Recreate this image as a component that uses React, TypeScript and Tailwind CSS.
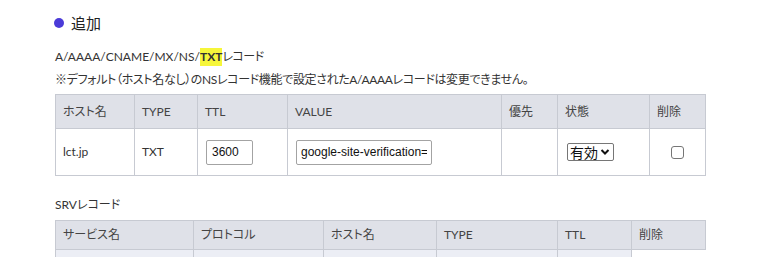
import React from 'react';

const FONT = "font-['Lato','Noto_Sans_CJK_JP',sans-serif] [font-feature-settings:'palt']";
const th = 'border border-[#c7cad2] bg-[#dfe1e8] px-[7px] text-left font-normal text-[12px] text-[#444]';
const td = 'border border-[#c7cad2] px-[7px] text-[12px] text-[#333]';
const field = "h-[25px] border border-[#a3a3a3] rounded-[2px] text-[12px] font-['Liberation_Sans',Arial,sans-serif] text-[#111]";

const App: React.FC = () => {
  return (
    <div className={`w-[766px] h-[257px] overflow-hidden bg-white text-[#333] ${FONT}`}>
      <div className="pl-[54px] pt-[13px] w-[705px]">
        <div className="flex items-center gap-[7px] h-[20px]">
          <span className="w-[10px] h-[10px] rounded-full bg-[#4b3bd8]" />
          <span className="text-[15px] font-normal text-[#222]">追加</span>
        </div>

        <div className="mt-[14px] h-[20px] flex items-center text-[12px] pl-[1px]">
          A/AAAA/CNAME/MX/NS/<span className="bg-[#f6f63a] font-bold">TXT</span>
          <span className="tracking-[-0.5px]">レコード</span>
        </div>
        <div className="mt-[3px] h-[20px] flex items-center text-[12px] pl-[1px] tracking-[-0.35px]">
          ※デフォルト（ホスト名なし）のNSレコード機能で設定されたA/AAAAレコードは変更できません。
        </div>

        <table className="mt-[4px] ml-[1px] w-[650px] border-collapse table-fixed">
          <colgroup>
            <col className="w-[79px]" />
            <col className="w-[63px]" />
            <col className="w-[90px]" />
            <col className="w-[214px]" />
            <col className="w-[56px]" />
            <col className="w-[92px]" />
            <col className="w-[56px]" />
          </colgroup>
          <thead>
            <tr className="h-[34px]">
              <th className={th}>ホスト名</th>
              <th className={th}>TYPE</th>
              <th className={th}>TTL</th>
              <th className={th}>VALUE</th>
              <th className={th}>優先</th>
              <th className={th}>状態</th>
              <th className={th}>削除</th>
            </tr>
          </thead>
          <tbody>
            <tr className="h-[47px]">
              <td className={td}>lct.jp</td>
              <td className={td}>TXT</td>
              <td className={td}>
                <input defaultValue="3600" className={`${field} ml-[1px] w-[47px] px-[5px]`} />
              </td>
              <td className={td}>
                <input
                  defaultValue="google-site-verification=xxxxxxxxxxxx"
                  className={`${field} ml-[1px] w-[136px] px-[4px]`}
                />
              </td>
              <td className={td}></td>
              <td className={td}>
                <div className="relative ml-[2px] w-[47px] h-[18px]">
                  <select className="appearance-none block w-[47px] h-[18px] border border-[#767676] rounded-[2px] pl-[2px] pr-[14px] text-[14px] leading-[16px] font-['Noto_Sans_CJK_JP',sans-serif] text-[#111]">
                    <option>有効</option>
                    <option>無効</option>
                  </select>
                  <svg className="absolute right-[4px] top-[5px] pointer-events-none" width="10" height="8" viewBox="0 0 10 8">
                    <path d="M1.5 2 L5 5.5 L8.5 2" fill="none" stroke="#111" strokeWidth="2" />
                  </svg>
                </div>
              </td>
              <td className={`${td} text-center`}>
                <input
                  type="checkbox"
                  className="appearance-none align-middle w-[13px] h-[13px] border border-[#767676] rounded-[3px] bg-white"
                />
              </td>
            </tr>
          </tbody>
        </table>

        <div className="mt-[19px] h-[20px] flex items-center text-[12px] pl-[1px]">SRVレコード</div>

        <table className="mt-[5px] ml-[1px] w-[650px] border-collapse table-fixed">
          <colgroup>
            <col className="w-[138px]" />
            <col className="w-[130px]" />
            <col className="w-[113px]" />
            <col className="w-[121px]" />
            <col className="w-[74px]" />
            <col className="w-[74px]" />
          </colgroup>
          <thead>
            <tr className="h-[29px]">
              <th className={th}>サービス名</th>
              <th className={th}>プロトコル</th>
              <th className={th}>ホスト名</th>
              <th className={th}>TYPE</th>
              <th className={th}>TTL</th>
              <th className={th}>削除</th>
            </tr>
          </thead>
          <tbody>
            <tr className="h-[40px]">
              <td className={`${td} bg-[#eceef5]`}></td>
              <td className={`${td} bg-[#eceef5]`}></td>
              <td className={`${td} bg-[#eceef5]`}></td>
              <td className={`${td} bg-[#eceef5]`}></td>
              <td className={`${td} bg-[#eceef5]`}></td>
              <td className="border-t border-[#c7cad2]"></td>
            </tr>
          </tbody>
        </table>
      </div>
    </div>
  );
};

export default App;
